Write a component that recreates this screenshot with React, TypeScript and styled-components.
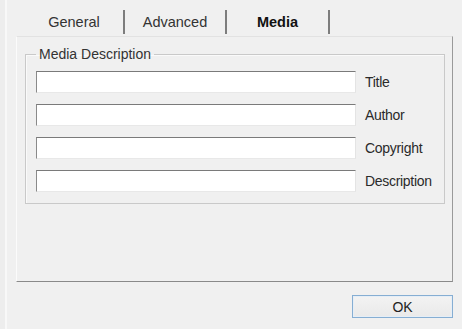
import React from 'react';
import styled, {createGlobalStyle} from 'styled-components';

const GlobalStyle = createGlobalStyle`
  body {
    margin: 0;
    background: #f0f0f0;
  }
`;

const fields = ['Title', 'Author', 'Copyright', 'Description'];

const tabs = [
  {label: 'General', width: 100},
  {label: 'Advanced', width: 102},
  {label: 'Media', width: 103, active: true},
];

const App: React.FC = () => {
  return (
    <>
      <GlobalStyle />
      <Window>
        <TabStrip>
          {tabs.map(tab => (
            <Tab key={tab.label} $width={tab.width} $active={tab.active}>
              {tab.label}
            </Tab>
          ))}
        </TabStrip>
        <Panel>
          <GroupBox>
            <Legend>Media Description</Legend>
            <Rows>
              {fields.map(field => (
                <Row key={field}>
                  <TextBox type="text" aria-label={field} />
                  <FieldLabel>{field}</FieldLabel>
                </Row>
              ))}
            </Rows>
          </GroupBox>
        </Panel>
        <Footer>
          <Button type="button">OK</Button>
        </Footer>
      </Window>
    </>
  );
};

export default App;

const Window = styled.div`
  width: 462px;
  height: 329px;
  box-sizing: border-box;
  padding: 0 9px 0 16px;
  display: flex;
  flex-direction: column;
  background: #f0f0f0;
  box-shadow: inset 5px 0 0 #ededed, inset 7px 0 0 #f8f8f8;
  font-family: 'Liberation Sans', Arial, sans-serif;
  font-size: 14px;
  color: #222;
`;

const TabStrip = styled.div`
  display: flex;
  align-items: flex-end;
  height: 36px;
  padding-left: 9px;
`;

const Tab = styled.div<{$width: number; $active?: boolean}>`
  width: ${p => p.$width}px;
  height: 24px;
  margin-bottom: 2px;
  display: flex;
  align-items: center;
  justify-content: center;
  box-sizing: border-box;
  border-right: 2px solid #7d7d7d;
  font-size: 14.5px;
  font-weight: ${p => (p.$active ? 700 : 400)};
  color: ${p => (p.$active ? '#111' : '#333')};
`;

const Panel = styled.div`
  height: 246px;
  box-sizing: border-box;
  border: 1px solid;
  border-color: #e2e2e2 #9a9a9a #8a8a8a #fbfbfb;
  padding: 9px 7px 0 8px;
`;

const GroupBox = styled.fieldset`
  margin: 0;
  padding: 9px 11px 11px 10px;
  border: 1px solid #c9c9c9;
  box-shadow: inset 1px 1px 0 #fafafa;
`;

const Legend = styled.legend`
  padding: 0 3px;
  line-height: 16px;
  color: #333;
`;

const Rows = styled.div`
  display: flex;
  flex-direction: column;
  gap: 11px;
`;

const Row = styled.div`
  display: flex;
  align-items: center;
  gap: 9px;
`;

const TextBox = styled.input`
  width: 320px;
  height: 22px;
  box-sizing: border-box;
  margin: 0;
  border: 1px solid;
  border-color: #7a7a7a #e4e4e4 #e8e8e8 #8a8a8a;
  background: #fff;
`;

const FieldLabel = styled.span`
  letter-spacing: -0.3px;
  color: #2a2a2a;
`;

const Footer = styled.div`
  display: flex;
  justify-content: flex-end;
  padding-top: 13px;
`;

const Button = styled.button`
  width: 101px;
  height: 23px;
  box-sizing: border-box;
  border: 1px solid #86aed3;
  box-shadow: inset 0 0 0 1px #e6eef6;
  background: linear-gradient(#f3f3f3, #e9e9e9);
  font-family: 'Liberation Sans', Arial, sans-serif;
  font-size: 14px;
  color: #222;
  padding: 0;
`;
